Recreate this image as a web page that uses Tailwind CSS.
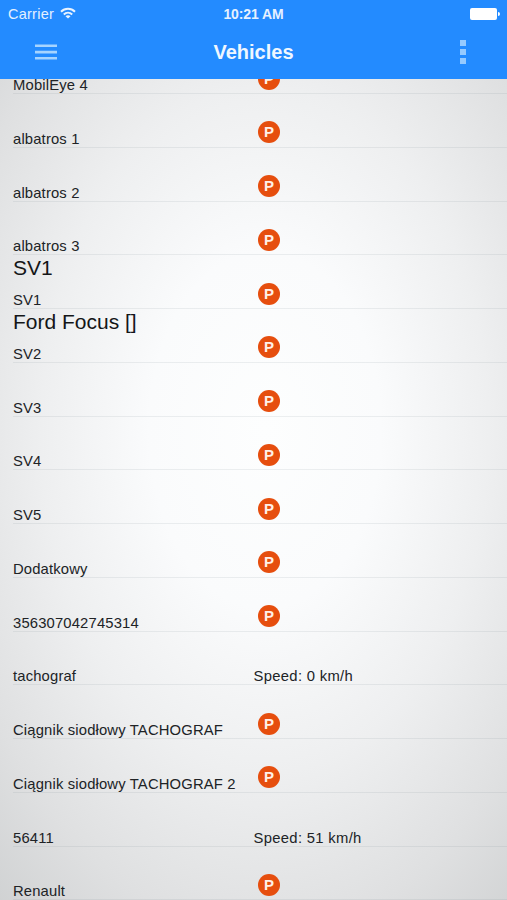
<!DOCTYPE html>
<html lang="en">
<head>
<meta charset="utf-8">
<title>Vehicles</title>
<script src="https://cdn.jsdelivr.net/npm/@tailwindcss/browser@4"></script>
</head>
<body class="h-[900px] overflow-hidden font-['Liberation_Sans',Arial,sans-serif] text-[#202326]">
<div class="flex h-[900px] w-[507px] flex-col overflow-hidden bg-[radial-gradient(ellipse_430px_660px_at_265px_430px,#fdfefe_0%,#fafbfc_27%,#eeeff0_52%,#dfe0e1_76%,#cccecf_100%)]">
  <header class="relative z-10 h-[79px] shrink-0 bg-[#238bff] text-white">
    <div class="grid h-[28px] grid-cols-3 items-center text-[14px]">
      <div class="flex items-center gap-[6px] pl-2">
        <span class="pt-px text-[14.5px] tracking-[0.25px] text-[#e4f0ff]">Carrier</span>
        <svg class="-mt-[2px] h-[12px] w-[16px]" viewBox="0 0 16 12" fill="none" stroke="#e9f3ff" stroke-width="2">
          <path d="M1 4.7C5 .8 11 .8 15 4.7M3.8 7.5c2.4-2.3 6-2.3 8.4 0"/>
          <path d="M8 11.6 5.5 9.2c1.4-1.3 3.6-1.3 5 0Z" fill="#e9f3ff" stroke="none"/>
        </svg>
      </div>
      <div class="text-center font-bold tracking-[-0.1px] text-[#e6f1ff]"><span>10:21 AM</span></div>
      <div class="flex items-center justify-end pr-[7px]">
        <div class="h-[12px] w-[27px] rounded-[2px] bg-white"></div>
        <div class="ml-px h-[4px] w-[2px] rounded-r-full bg-white"></div>
      </div>
    </div>
    <div class="grid h-[48px] grid-cols-3 items-center">
      <svg class="h-[16px] w-[22px] translate-x-[35px]" viewBox="0 0 22 16" stroke="#a6d4ff" stroke-width="2.6">
        <path d="M0 1.8h22M0 8.1h22M0 14.3h22"/>
      </svg>
      <h1 class="text-center text-[20px] font-bold text-[#eff7ff]">Vehicles</h1>
      <div class="flex flex-col items-end gap-[3px] pr-[41px]">
        <div class="size-[6px] bg-[#95caff]"></div>
        <div class="size-[6px] bg-[#95caff]"></div>
        <div class="size-[6px] bg-[#95caff]"></div>
      </div>
    </div>
  </header>
  <main id="list" class="-mt-[38.5px]"></main>
</div>
<script>
const rows = [
  { name: 'MobilEye 4' }, { name: 'albatros 1' }, { name: 'albatros 2' }, { name: 'albatros 3' },
  { name: 'SV1', title: 'SV1' }, { name: 'SV2', title: 'Ford Focus []' },
  { name: 'SV3' }, { name: 'SV4' }, { name: 'SV5' }, { name: 'Dodatkowy' }, { name: '356307042745314' },
  { name: 'tachograf', speed: 'Speed: 0 km/h' },
  { name: 'Ciągnik siodłowy TACHOGRAF' }, { name: 'Ciągnik siodłowy TACHOGRAF 2' },
  { name: '56411', speed: 'Speed: 51 km/h' }, { name: 'Renault' }
];
const parked = '<div class="ml-[4px] mb-[3.5px] flex size-[22px] items-center justify-center rounded-full bg-[#e64e0e] text-[15px] leading-none font-bold text-[#fff0e9]"><span class="pb-px pl-px">P</span></div>';
document.getElementById('list').innerHTML = rows.map(r => `
  <section class="ml-[13px] flex h-[53.74px] items-end border-b border-[#70808a]/12">
    <div class="flex h-full w-[240.5px] flex-col justify-between whitespace-nowrap">
      <div class="text-[21px] leading-[25px] text-[#141618]">${r.title || ''}</div>
      <div class="text-[14.8px] leading-[16px] tracking-[0.16px]">${r.name}</div>
    </div>
    ${r.speed ? `<div class="text-[14.8px] leading-[16px] tracking-[0.32px]">${r.speed}</div>` : parked}
  </section>`).join('');
</script>
</body>
</html>
